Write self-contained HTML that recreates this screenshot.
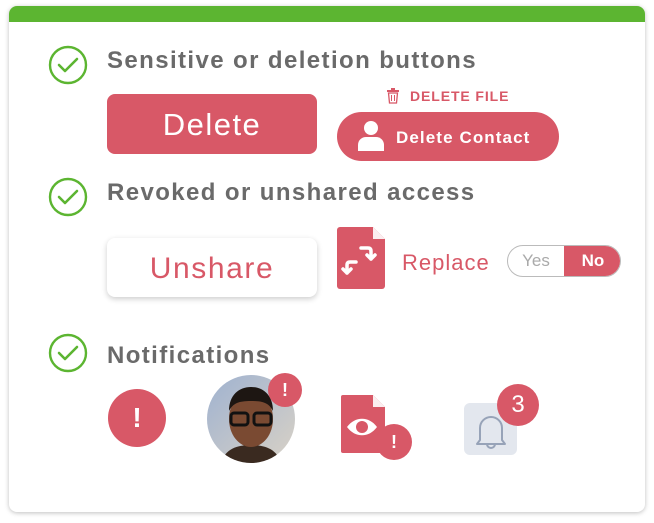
<!DOCTYPE html>
<html><head><style>
body{margin:0;width:654px;height:523px;background:#fff;font-family:"Liberation Sans",sans-serif;position:relative;overflow:hidden}
.card{position:absolute;left:9px;top:6px;width:636px;height:506px;border-radius:8px;background:#fff;box-shadow:0 1px 5px rgba(0,0,0,.25);overflow:hidden}
.bar{position:absolute;left:0;top:0;width:100%;height:16px;background:#5cb531}
.a{position:absolute}
.h{position:absolute;left:107px;font-size:24px;color:#6a6a6a;font-weight:600;white-space:nowrap;letter-spacing:1.4px}
.red{background:#d85867}
.w{color:#fff}
</style></head><body>
<div class="card"><div class="bar"></div></div>
<svg class="a" style="left:48px;top:45px" width="40" height="40"><circle cx="20" cy="20" r="18" fill="none" stroke="#5cb531" stroke-width="2.4"/><path d="M11 20l6 6 12-12" fill="none" stroke="#5cb531" stroke-width="2.6" stroke-linecap="round" stroke-linejoin="round"/></svg>
<svg class="a" style="left:48px;top:177px" width="40" height="40"><circle cx="20" cy="20" r="18" fill="none" stroke="#5cb531" stroke-width="2.4"/><path d="M11 20l6 6 12-12" fill="none" stroke="#5cb531" stroke-width="2.6" stroke-linecap="round" stroke-linejoin="round"/></svg>
<svg class="a" style="left:48px;top:333px" width="40" height="40"><circle cx="20" cy="20" r="18" fill="none" stroke="#5cb531" stroke-width="2.4"/><path d="M11 20l6 6 12-12" fill="none" stroke="#5cb531" stroke-width="2.6" stroke-linecap="round" stroke-linejoin="round"/></svg>
<div class="h" style="top:47px">Sensitive or deletion buttons</div>
<div class="h" style="top:179px">Revoked or unshared access</div>
<div class="h" style="top:342px">Notifications</div>

<div class="a red w" style="left:107px;top:94px;width:210px;height:60px;border-radius:8px;font-size:31px;text-align:center;line-height:62px;letter-spacing:1.5px">Delete</div>
<svg class="a" style="left:386px;top:88px" width="14" height="16"><rect x="1" y="2" width="12" height="2" fill="#d85867"/><rect x="5" y="0" width="4" height="2" fill="#d85867"/><path d="M2.5 5h9l-1 10h-7z" fill="none" stroke="#d85867" stroke-width="1.3"/><path d="M5.5 7v6M8.5 7v6" stroke="#d85867"/></svg>
<div class="a" style="left:410px;top:88px;font-size:14px;font-weight:bold;color:#d85867;letter-spacing:.9px">DELETE FILE</div>
<div class="a red w" style="left:337px;top:112px;width:222px;height:49px;border-radius:25px"></div>
<svg class="a" style="left:357px;top:120px" width="28" height="32"><circle cx="14" cy="8" r="7" fill="#fff"/><path d="M1 31v-6c0-5 4-8 8-8h10c4 0 8 3 8 8v6z" fill="#fff"/></svg>
<div class="a w" style="left:396px;top:128px;font-size:17px;font-weight:bold;letter-spacing:1.1px">Delete Contact</div>

<div class="a" style="left:107px;top:238px;width:210px;height:59px;border-radius:8px;background:#fff;box-shadow:0 2px 6px rgba(0,0,0,.2);color:#d85867;font-size:30px;text-align:center;line-height:61px;letter-spacing:1.6px">Unshare</div>
<svg class="a" style="left:337px;top:227px" width="48" height="62"><path d="M3 0h33l12 12v47a3 3 0 0 1-3 3H3a3 3 0 0 1-3-3V3a3 3 0 0 1 3-3z" fill="#d85867"/><path d="M36 0v12h12" fill="#fff" opacity=".9"/><path d="M10 46v-8c0-2 1-3 3-3h6M6 42l4 4 4-4M24 21h7c2 0 3 1 3 3v8M30 28l4 4 4-4" fill="none" stroke="#fff" stroke-width="3.5" stroke-linecap="round" stroke-linejoin="round"/></svg>
<div class="a" style="left:402px;top:250px;font-size:22px;color:#d85867;letter-spacing:1px">Replace</div>
<div class="a" style="left:507px;top:245px;width:112px;height:30px;border:1px solid #bbb;border-radius:16px;overflow:hidden">
<div class="a" style="left:0;top:0;width:56px;height:30px;line-height:30px;text-align:center;color:#aaa;font-size:17px">Yes</div>
<div class="a red w" style="left:56px;top:0;width:58px;height:30px;line-height:30px;text-align:center;font-size:17px;font-weight:600">No</div></div>

<div class="a red w" style="left:108px;top:389px;width:58px;height:58px;border-radius:50%;text-align:center;line-height:58px;font-size:28px;font-weight:bold">!</div>
<svg class="a" style="left:207px;top:375px" width="88" height="88"><defs><linearGradient id="g" x1="0" y1="0" x2="1" y2="1"><stop offset="0" stop-color="#9fb2d0"/><stop offset="1" stop-color="#d9d2c6"/></linearGradient><clipPath id="c"><circle cx="44" cy="44" r="44"/></clipPath></defs><circle cx="44" cy="44" r="44" fill="url(#g)"/><g clip-path="url(#c)"><path d="M14 88c4-14 16-18 30-18s26 4 30 18z" fill="#3a2a20"/><ellipse cx="44" cy="44" rx="22" ry="28" fill="#7a4a32"/><path d="M22 36c0-16 10-24 22-24s22 8 22 24c-4-8-10-10-22-10s-18 2-22 10z" fill="#1d1612"/><rect x="24" y="38" width="17" height="12" rx="3" fill="none" stroke="#111" stroke-width="3"/><rect x="47" y="38" width="17" height="12" rx="3" fill="none" stroke="#111" stroke-width="3"/></g></svg>
<div class="a red w" style="left:268px;top:373px;width:34px;height:34px;border-radius:50%;text-align:center;line-height:34px;font-size:18px;font-weight:bold">!</div>
<svg class="a" style="left:341px;top:395px" width="46" height="58"><path d="M2 0h30l12 12v44a2 2 0 0 1-2 2H2a2 2 0 0 1-2-2V2a2 2 0 0 1 2-2z" fill="#d85867"/><path d="M32 0v12h12z" fill="#fff" opacity=".9"/><path d="M6 32c8-11 22-11 30 0-8 11-22 11-30 0z" fill="#fff"/><circle cx="21" cy="32" r="6" fill="#d85867"/></svg>
<div class="a red w" style="left:376px;top:424px;width:36px;height:36px;border-radius:50%;text-align:center;line-height:36px;font-size:18px;font-weight:bold">!</div>
<div class="a" style="left:464px;top:403px;width:53px;height:52px;border-radius:6px;background:#e3e7ee"></div>
<svg class="a" style="left:474px;top:410px" width="34" height="40"><path d="M6 30V18a11 11 0 0 1 22 0v12l3 4H3z" fill="none" stroke="#97a3b8" stroke-width="2" stroke-linejoin="round"/><path d="M13 34a4 4 0 0 0 8 0" fill="none" stroke="#97a3b8" stroke-width="2"/></svg>
<div class="a red w" style="left:497px;top:384px;width:42px;height:42px;border-radius:50%;text-align:center;line-height:42px;font-size:24px">3</div>
</body></html>
